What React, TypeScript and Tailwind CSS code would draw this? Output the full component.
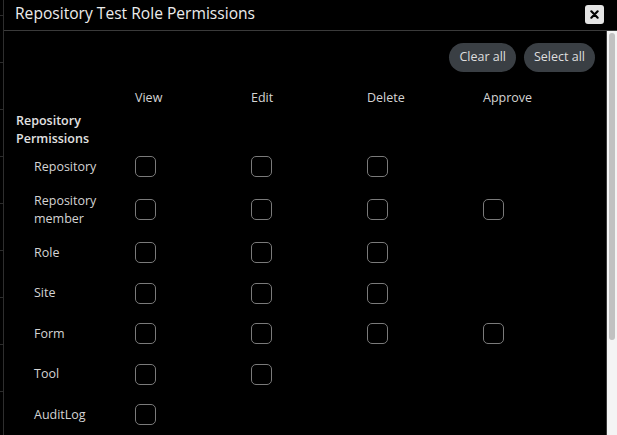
import React from "react";

type Perm = { label: string; cols: boolean[] };

const perms: Perm[] = [
  { label: "Repository", cols: [true, true, true, false] },
  { label: "Repository member", cols: [true, true, true, true] },
  { label: "Role", cols: [true, true, true, false] },
  { label: "Site", cols: [true, true, true, false] },
  { label: "Form", cols: [true, true, true, true] },
  { label: "Tool", cols: [true, true, false, false] },
  { label: "AuditLog", cols: [true, false, false, false] },
];

const headers = ["View", "Edit", "Delete", "Approve"];

const Box: React.FC = () => (
  <div className="w-[21px] h-[21px] rounded-[5px] border-[1.5px] border-[#7a7a7a]" />
);

export default function App() {
  return (
    <div
      className="w-[617px] h-[435px] bg-black overflow-hidden flex text-[12.5px] text-[#d4d4d4]"
      style={{ fontFamily: '"Open Sans", "Liberation Sans", sans-serif' }}
    >
      {/* page behind the dialog */}
      <div className="w-[3px] shrink-0 pt-[15px] flex flex-col">
        {Array.from({ length: 9 }).map((_, i) => (
          <div key={i} className="h-[47px] shrink-0 border-t border-[#2c2c2c]" />
        ))}
      </div>

      <div className="flex-1 flex flex-col border-l border-[#2e2e2e] min-w-0">
        <div className="h-[31px] shrink-0 flex items-center justify-between border-b border-[#3a3a3a] pl-[11px] pr-[13px]">
          <span className="text-[15.6px] text-[#ececec] leading-none -mt-[2px]">
            Repository Test Role Permissions
          </span>
          <button className="w-[19px] h-[19px] rounded-[3px] bg-[#e4e4e4] flex items-center justify-center -mt-[2px]">
            <svg width="9" height="9" viewBox="0 0 10 10">
              <path d="M1.5 1.5 L8.5 8.5 M8.5 1.5 L1.5 8.5" stroke="#000" strokeWidth="2.4" strokeLinecap="round" />
            </svg>
          </button>
        </div>

        <div className="flex-1 flex min-h-0">
          <div className="flex-1 min-w-0 pl-[12px] pr-[11px]">
            <div className="flex justify-end gap-[8px] mt-[12px]">
              <button className="h-[29px] px-[10px] rounded-full bg-[#3a3f44] text-[#dedede] text-[12.5px]">
                Clear all
              </button>
              <button className="h-[29px] px-[10px] rounded-full bg-[#3a3f44] text-[#dedede] text-[12.5px]">
                Select all
              </button>
            </div>

            <div className="flex mt-[17px] h-[18px] leading-[18px]">
              <div className="w-[119px] shrink-0" />
              {headers.map((h) => (
                <div key={h} className="w-[116px] shrink-0">
                  {h}
                </div>
              ))}
            </div>

            <div className="mt-[5px] font-semibold leading-[18px] text-[#e2e2e2] w-[100px]">
              Repository Permissions
            </div>

            <div className="flex flex-col -mt-[1.5px]">
              {perms.map((p, idx) => (
                <div
                  key={p.label}
                  className={`flex items-center ${
                    p.label === "Repository member" ? "h-[45.5px]" : idx === 0 ? "h-[40.5px]" : "h-[40.5px]"
                  }`}
                >
                  <div className="w-[119px] shrink-0 pl-[18px] pr-[20px] leading-[18px]">
                    {p.label}
                  </div>
                  {p.cols.map((c, i) => (
                    <div key={i} className="w-[116px] shrink-0">
                      {c && <Box />}
                    </div>
                  ))}
                </div>
              ))}
            </div>
          </div>

          <div className="w-[11px] shrink-0 bg-[#f4f4f4] border-l border-[#3a3a3a] pt-[2px] pl-[2px]">
            <div className="w-[6px] h-[307px] rounded-full bg-[#c1c1c1]" />
          </div>
        </div>
      </div>
    </div>
  );
}
